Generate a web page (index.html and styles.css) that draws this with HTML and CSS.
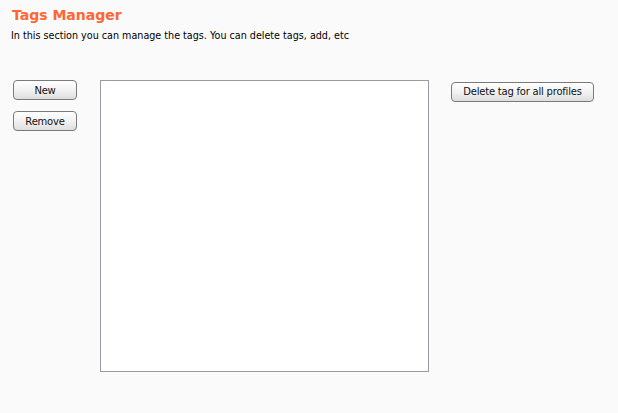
FILE: index.html
```html
<!DOCTYPE html>
<html>
<head>
<meta charset="utf-8">
<link rel="stylesheet" href="styles.css">
</head>
<body>
<div class="page">
  <h1 class="title">Tags Manager</h1>
  <p class="intro">In this section you can manage the tags. You can delete tags, add, etc</p>
  <div class="main">
    <div class="left-col">
      <button class="btn btn-small">New</button>
      <button class="btn btn-small">Remove</button>
    </div>
    <div class="listbox"></div>
    <div class="right-col">
      <button class="btn btn-wide">Delete tag for all profiles</button>
    </div>
  </div>
</div>
</body>
</html>
```

FILE: styles.css
```css
html, body {
  margin: 0;
  padding: 0;
  background: #fafafa;
}
body {
  font-family: "DejaVu Sans", sans-serif;
  color: #000;
  width: 618px;
  height: 413px;
  overflow: hidden;
}
.page {
  padding: 5px 0 0 11px;
}
.title {
  margin: 0 0 0 1px;
  font-size: 14px;
  font-weight: bold;
  color: #ff6633;
  line-height: 20px;
}
.intro {
  margin: 5px 0 0 0;
  font-size: 9.6px;
  line-height: 12px;
}
.main {
  display: flex;
  align-items: flex-start;
  margin-top: 38px;
}
.left-col {
  display: flex;
  flex-direction: column;
  gap: 11px;
  margin-left: 2px;
}
.btn {
  font-family: "DejaVu Sans", sans-serif;
  font-size: 10px;
  font-weight: normal;
  letter-spacing: -0.22px;
  color: #111;
  height: 20px;
  padding: 0;
  border: 1px solid #7a7a7a;
  border-radius: 4px;
  background: linear-gradient(#ffffff, #f2f2f2 50%, #dedede);
  box-sizing: border-box;
}
.btn-small {
  width: 64px;
}
.btn-wide {
  width: 143px;
}
.listbox {
  width: 329px;
  height: 292px;
  box-sizing: border-box;
  margin-left: 23px;
  background: #fff;
  border: 1px solid #9a9aa4;
}
.right-col {
  margin-left: 22px;
}
```
